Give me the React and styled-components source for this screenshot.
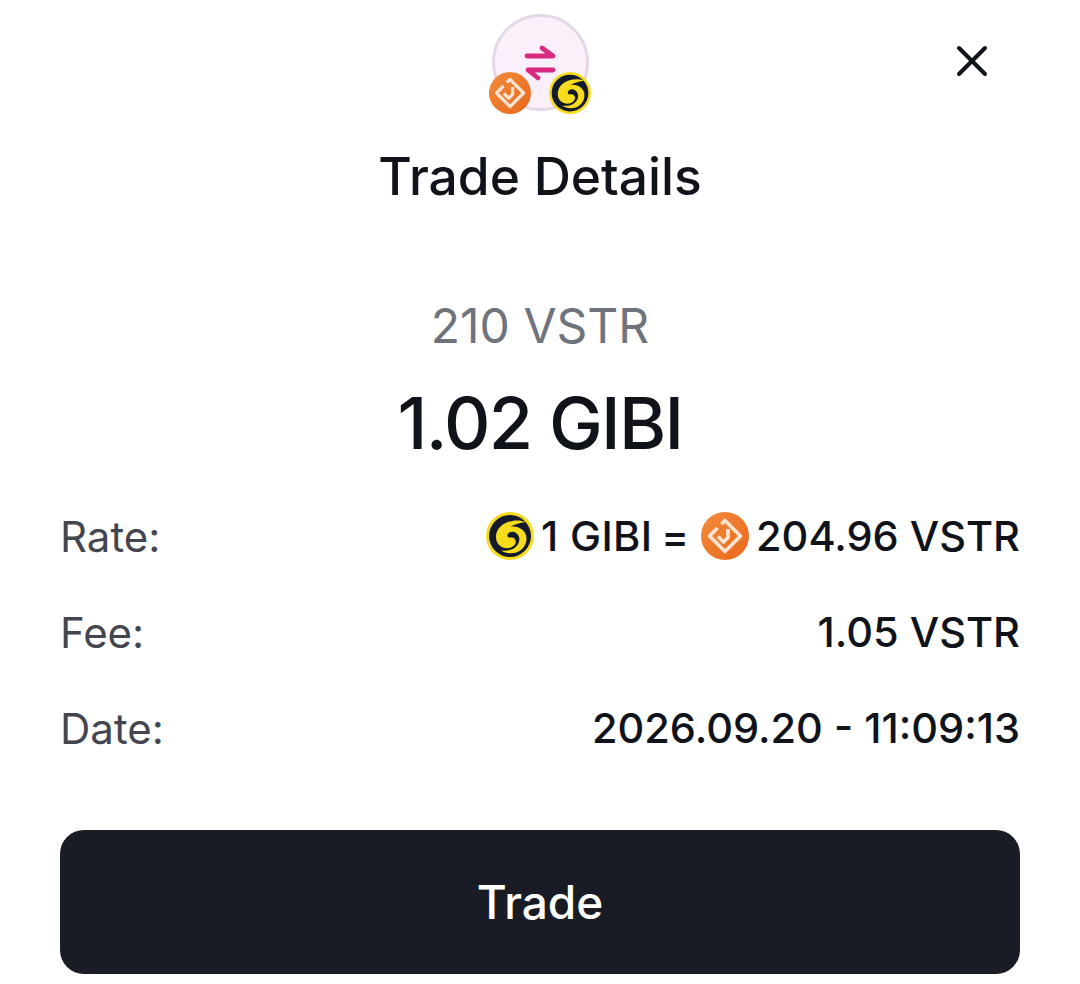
import React from 'react';
import styled, { createGlobalStyle } from 'styled-components';

const GlobalStyle = createGlobalStyle`
  html, body {
    margin: 0;
    padding: 0;
    background: #fff;
    font-family: Inter, "Liberation Sans", sans-serif;
  }
`;

// Orange token with the folded diamond mark
const VstrIcon = ({ size }) => (
  <svg width={size} height={size} viewBox="0 0 48 48">
    <defs>
      <linearGradient id="vstr" x1="0" y1="0" x2="1" y2="1">
        <stop offset="0" stopColor="#f28d3c" />
        <stop offset="1" stopColor="#e9661b" />
      </linearGradient>
    </defs>
    <circle cx="24" cy="24" r="24" fill="url(#vstr)" />
    <path
      d="M20.5 12 L24 8.5 L39.5 24 L24 39.5 L8.5 24 L16.5 16"
      fill="none"
      stroke="#fce4d3"
      strokeWidth="3.7"
      strokeLinejoin="round"
    />
    <path
      d="M17 24.5 L22.5 30 L27 25.5 V17"
      fill="none"
      stroke="#fce4d3"
      strokeWidth="3.7"
      strokeLinejoin="round"
    />
  </svg>
);

// Yellow token with the dark swirl
const GibiIcon = ({ size }) => (
  <svg width={size} height={size} viewBox="0 0 48 48">
    <circle cx="24" cy="24" r="24" fill="#f7dc1e" />
    <circle cx="24" cy="24" r="21" fill="#131a2b" />
    <path
      d="M40 10 C27 5 10 12 10 25 C10 35 21 39 27.5 34 C32 30 29 25.5 26 25.5 C23 25.5 21 25.5 21.5 23 C23 18 31 18.5 33 25 C35 32 28 40 15 38.5 C25 45 40 40 40.5 27 C41 17 30 13 24 15 C28 12.5 33 11 40 10 Z"
      fill="#f7dc1e"
    />
  </svg>
);

const CloseIcon = () => (
  <svg width="32" height="32" viewBox="0 0 32 32" fill="none" stroke="#10131a" strokeWidth="4" strokeLinecap="round">
    <path d="M3 3 L29 29" />
    <path d="M29 3 L3 29" />
  </svg>
);

const SwapIcon = () => (
  <svg width="32" height="38" viewBox="0 0 32 38" fill="none" stroke="#d92a7f" strokeWidth="4.8" strokeLinecap="round" strokeLinejoin="round">
    <path d="M3 12 H29 L18 4" />
    <path d="M29 26 H4 L14 34" />
  </svg>
);

const Page = styled.div`
  position: relative;
  box-sizing: border-box;
  width: 1080px;
  height: 984px;
  padding: 14px 60px 0;
  display: flex;
  flex-direction: column;
  align-items: center;
  overflow: hidden;
  background: #fff;
`;

const CloseButton = styled.button`
  position: absolute;
  top: 45px;
  left: 956px;
  width: 32px;
  height: 32px;
  padding: 0;
  border: 0;
  background: none;
  display: flex;
`;

const Badge = styled.div`
  position: relative;
  box-sizing: border-box;
  width: 97px;
  height: 97px;
  border-radius: 50%;
  border: 3px solid #e3d8e6;
  background: #fbf0fa;
  display: flex;
  align-items: center;
  justify-content: center;
`;

const BadgeToken = styled.span`
  position: absolute;
  top: 55px;
  left: ${(p) => p.$left}px;
  width: 42px;
  height: 42px;
  display: flex;
`;

const Title = styled.h1`
  margin: 33px 0 0;
  font-size: 51.5px;
  line-height: 64px;
  font-weight: 500;
  color: #10131a;
`;

const Sent = styled.div`
  margin-top: 90px;
  font-size: 48px;
  line-height: 56px;
  font-weight: 400;
  color: #6f737c;
`;

const Received = styled.div`
  margin-top: 25px;
  font-size: 72px;
  line-height: 88px;
  font-weight: 500;
  letter-spacing: -1.7px;
  color: #10131a;
`;

const Rows = styled.div`
  width: 100%;
  margin-top: 45px;
  display: flex;
  flex-direction: column;
  gap: 48px;
`;

const Row = styled.div`
  height: 48px;
  display: flex;
  align-items: center;
  justify-content: space-between;
`;

const Label = styled.span`
  font-size: 42px;
  color: #44464f;
`;

const Value = styled.span`
  display: flex;
  align-items: center;
  font-size: 41.5px;
  font-weight: 500;
  color: #10131a;
`;

const RateGroup = styled.span`
  display: flex;
  align-items: center;
  gap: 7px;
`;

const GibiAmount = styled.span`
  letter-spacing: 0.35px;
`;

const Equals = styled.span`
  margin: 0 12px 0 9px;
`;

const TradeButton = styled.button`
  width: 100%;
  height: 144px;
  margin-top: 78px;
  border: 0;
  border-radius: 24px;
  background: #191c25;
  color: #fff;
  font-family: inherit;
  font-size: 46px;
  font-weight: 500;
`;

const App = () => {
  return (
    <Page>
      <GlobalStyle />
      <CloseButton>
        <CloseIcon />
      </CloseButton>
      <Badge>
        <SwapIcon />
        <BadgeToken $left={-6}>
          <VstrIcon size={42} />
        </BadgeToken>
        <BadgeToken $left={54}>
          <GibiIcon size={42} />
        </BadgeToken>
      </Badge>
      <Title>Trade Details</Title>
      <Sent>210 VSTR</Sent>
      <Received>1.02 GIBI</Received>
      <Rows>
        <Row>
          <Label>Rate:</Label>
          <Value>
            <RateGroup>
              <GibiIcon size={48} />
              <GibiAmount>1 GIBI</GibiAmount>
            </RateGroup>
            <Equals>=</Equals>
            <RateGroup>
              <VstrIcon size={48} />
              204.96 VSTR
            </RateGroup>
          </Value>
        </Row>
        <Row>
          <Label>Fee:</Label>
          <Value>1.05 VSTR</Value>
        </Row>
        <Row>
          <Label>Date:</Label>
          <Value>2026.09.20 - 11:09:13</Value>
        </Row>
      </Rows>
      <TradeButton>Trade</TradeButton>
    </Page>
  );
};

export default App;
